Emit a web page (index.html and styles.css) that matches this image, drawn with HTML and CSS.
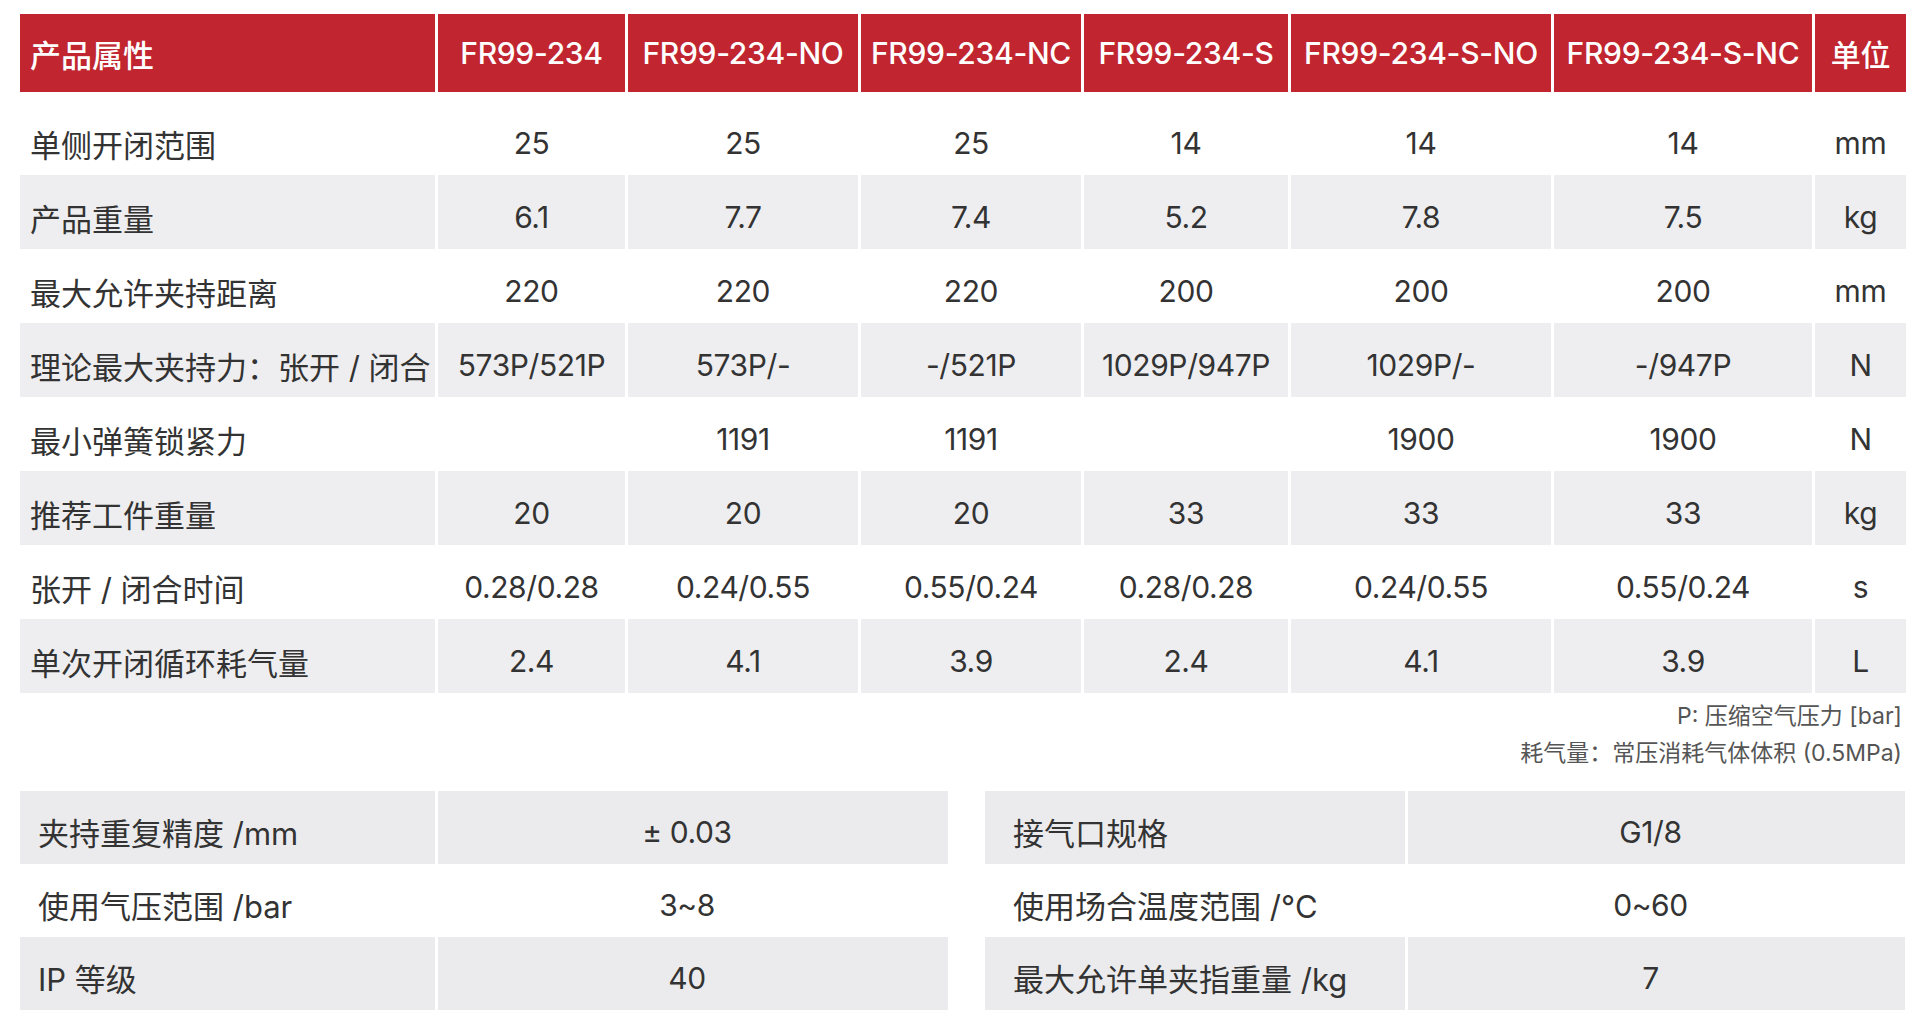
FILE: index.html
```html
<!DOCTYPE html>
<html lang="zh-CN">
<head>
<meta charset="utf-8">
<title>FR99-234 产品参数</title>
<link rel="stylesheet" href="styles.css">
</head>
<body>
<main class="page">
  <table class="spec">
    <colgroup>
      <col class="c-attr"><col class="c-m1"><col class="c-m2"><col class="c-m3"><col class="c-m4"><col class="c-m5"><col class="c-m6"><col class="c-unit">
    </colgroup>
    <thead>
      <tr>
        <th class="attr">产品属性</th>
        <th>FR99-234</th>
        <th>FR99-234-NO</th>
        <th>FR99-234-NC</th>
        <th>FR99-234-S</th>
        <th>FR99-234-S-NO</th>
        <th>FR99-234-S-NC</th>
        <th>单位</th>
      </tr>
    </thead>
    <tbody>
      <tr class="first">
        <td class="attr">单侧开闭范围</td><td>25</td><td>25</td><td>25</td><td>14</td><td>14</td><td>14</td><td>mm</td>
      </tr>
      <tr class="alt">
        <td class="attr">产品重量</td><td>6.1</td><td>7.7</td><td>7.4</td><td>5.2</td><td>7.8</td><td>7.5</td><td>kg</td>
      </tr>
      <tr>
        <td class="attr">最大允许夹持距离</td><td>220</td><td>220</td><td>220</td><td>200</td><td>200</td><td>200</td><td>mm</td>
      </tr>
      <tr class="alt">
        <td class="attr">理论最大夹持力：张开 / 闭合</td><td>573P/521P</td><td>573P/-</td><td>-/521P</td><td>1029P/947P</td><td>1029P/-</td><td>-/947P</td><td>N</td>
      </tr>
      <tr>
        <td class="attr">最小弹簧锁紧力</td><td></td><td>1191</td><td>1191</td><td></td><td>1900</td><td>1900</td><td>N</td>
      </tr>
      <tr class="alt">
        <td class="attr">推荐工件重量</td><td>20</td><td>20</td><td>20</td><td>33</td><td>33</td><td>33</td><td>kg</td>
      </tr>
      <tr>
        <td class="attr">张开 / 闭合时间</td><td>0.28/0.28</td><td>0.24/0.55</td><td>0.55/0.24</td><td>0.28/0.28</td><td>0.24/0.55</td><td>0.55/0.24</td><td>s</td>
      </tr>
      <tr class="alt">
        <td class="attr">单次开闭循环耗气量</td><td>2.4</td><td>4.1</td><td>3.9</td><td>2.4</td><td>4.1</td><td>3.9</td><td>L</td>
      </tr>
    </tbody>
  </table>

  <div class="notes">
    <p>P: 压缩空气压力 [bar]</p>
    <p>耗气量：常压消耗气体体积 (0.5MPa)</p>
  </div>

  <div class="extra">
    <table class="kv kv-left">
      <colgroup><col class="k"><col class="v"></colgroup>
      <tbody>
        <tr class="alt"><td class="key">夹持重复精度 /mm</td><td class="val">± 0.03</td></tr>
        <tr><td class="key">使用气压范围 /bar</td><td class="val">3~8</td></tr>
        <tr class="alt"><td class="key">IP 等级</td><td class="val">40</td></tr>
      </tbody>
    </table>
    <table class="kv kv-right">
      <colgroup><col class="k"><col class="v"></colgroup>
      <tbody>
        <tr class="alt"><td class="key">接气口规格</td><td class="val">G1/8</td></tr>
        <tr><td class="key">使用场合温度范围 /°C</td><td class="val">0~60</td></tr>
        <tr class="alt"><td class="key">最大允许单夹指重量 /kg</td><td class="val">7</td></tr>
      </tbody>
    </table>
  </div>
</main>
</body>
</html>
```

FILE: styles.css
```css
* { box-sizing: border-box; }

html, body {
  margin: 0;
  padding: 0;
  background: #ffffff;
}

body {
  font-family: Inter, "Noto Sans CJK SC", sans-serif;
  color: #333333;
}

.page {
  padding: 14px 14px 0 20px;
  display: flex;
  flex-direction: column;
}

/* ---------- main spec table ---------- */
.spec {
  width: 1886px;
  table-layout: fixed;
  border-collapse: separate;
  border-spacing: 0;
  font-size: 30px;
}

.c-attr { width: 418px; }
.c-m1 { width: 190px; }
.c-m2 { width: 233px; }
.c-m3 { width: 223px; }
.c-m4 { width: 207px; }
.c-m5 { width: 263px; }
.c-m6 { width: 261px; }
.c-unit { width: 91px; }

.spec th,
.spec td {
  border-right: 3px solid #ffffff;
  text-align: center;
  vertical-align: middle;
  white-space: nowrap;
  padding: 0;
}

.spec th:last-child,
.spec td:last-child { border-right: 0; }

.spec th {
  height: 78px;
  background: #c1252f;
  color: #ffffff;
  font-weight: 500;
  letter-spacing: -0.3px;
}

.spec .attr {
  text-align: left;
  padding-left: 10px;
  font-size: 31px;
  letter-spacing: 0;
}

.spec td {
  height: 74px;
  padding-top: 10px;
  font-weight: 400;
  letter-spacing: -0.4px;
}

.spec tr.first td {
  height: 83px;
  padding-top: 19px;
}

.spec tr.alt td {
  background: #eeeef0;
}

/* ---------- notes ---------- */
.notes {
  margin: 5px 0 0 0;
  padding-right: 4px;
  text-align: right;
  font-size: 23px;
  line-height: 37px;
  color: #555555;
}

.notes p { margin: 0; }

/* ---------- bottom key/value tables ---------- */
.extra {
  display: flex;
  gap: 37px;
  margin-top: 19px;
}

.kv {
  table-layout: fixed;
  border-collapse: separate;
  border-spacing: 0;
  font-size: 30px;
}

.kv-left { width: 928px; }
.kv-left .k { width: 418px; }
.kv-right { width: 920px; }
.kv-right .k { width: 423px; }

.kv td {
  height: 73px;
  padding: 8px 0 0 0;
  text-align: center;
  vertical-align: middle;
  white-space: nowrap;
  letter-spacing: -0.4px;
}

.kv td.val { padding-right: 12px; }

.kv td.key {
  text-align: left;
  border-right: 3px solid #ffffff;
  font-size: 31px;
  letter-spacing: 0;
}

.kv-left td.key { padding-left: 18px; }
.kv-right td.key { padding-left: 28px; }

.kv tr.alt td { background: #ebebed; }
```
